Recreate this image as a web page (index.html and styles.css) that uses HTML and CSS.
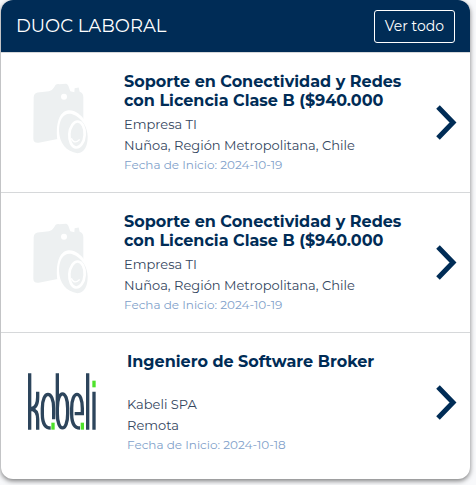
FILE: index.html
```
<!DOCTYPE html>
<html lang="es">
<head>
<meta charset="utf-8">
<meta name="viewport" content="width=device-width, initial-scale=1">
<title>DUOC LABORAL</title>
<link rel="stylesheet" href="styles.css">
</head>
<body>
<svg class="defs" aria-hidden="true">
  <symbol id="camera" viewBox="40 40 165 215">
    <path class="camera-fill" d="M42 82Q43 70 54 68L88 64Q98 62 103 53L108 45Q112 42 119 43L139 42Q145 43 148 54L152 64L164 67L165 55L177 53L180 66Q191 70 191 82V200L110 208L61 218Q41 222 41 207Z"/>
    <circle class="camera-gap" cx="133" cy="81" r="9"/>
    <path class="camera-gap" d="M113 210C107 165 118 122 148 121C168 121 184 135 194 150V215Z"/>
    <path class="camera-fill" d="M158 133C132 127 118 150 118 183C119 219 139 247 174 250C194 249 204 229 204 200C203 171 188 144 158 133Z"/>
    <ellipse class="camera-ring" cx="172" cy="194" rx="23" ry="39" transform="rotate(4 172 194)"/>
    <path class="camera-shine" d="M155 205Q163 225 180 209"/>
  </symbol>
  <symbol id="chevron" viewBox="0 0 21 35">
    <path class="chevron-line" d="M2 2L17 17.500L2 33"/>
  </symbol>
</svg>
<main class="card">
  <header class="card-header">
    <h1 class="card-title">DUOC LABORAL</h1>
    <button class="more" type="button">Ver todo</button>
  </header>
  <ul class="jobs">
    <li class="job">
      <div class="media"><svg class="camera" aria-hidden="true"><use href="#camera"/></svg></div>
      <div class="info">
        <h2 class="name">Soporte en Conectividad y Redes con Licencia Clase B ($940.000</h2>
        <p class="detail">Empresa TI</p>
        <p class="detail">Nuñoa, Región Metropolitana, Chile</p>
        <p class="date">Fecha de Inicio: 2024-10-19</p>
      </div>
      <a class="open" href="#" aria-label="Ver oferta"><svg class="chevron"><use href="#chevron"/></svg></a>
    </li>
    <li class="job">
      <div class="media"><svg class="camera" aria-hidden="true"><use href="#camera"/></svg></div>
      <div class="info">
        <h2 class="name">Soporte en Conectividad y Redes con Licencia Clase B ($940.000</h2>
        <p class="detail">Empresa TI</p>
        <p class="detail">Nuñoa, Región Metropolitana, Chile</p>
        <p class="date">Fecha de Inicio: 2024-10-19</p>
      </div>
      <a class="open" href="#" aria-label="Ver oferta"><svg class="chevron"><use href="#chevron"/></svg></a>
    </li>
    <li class="job">
      <div class="media media-logo">
        <svg class="logo" viewBox="0 0 204 171" role="img" aria-label="kabeli">
          <g class="logo-ink">
            <path d="M5 1V170M29 56V72Q29 106 8 108Q29 110 29 138V170"/>
            <path d="M77 139V106C77 50 43 50 43 106V122C43 152 52 165 68 165"/>
            <path d="M88 1V122C88 179 119 179 119 122V106C119 48 88 48 88 106"/>
            <path d="M140 122H163V106C163 50 131 50 131 106V122C131 152 140 165 156 165"/>
            <path d="M179 1V170M198 56V170"/>
          </g>
          <g class="logo-accent">
            <rect x="70" y="149" width="10" height="21"/>
            <rect x="158" y="149" width="10" height="21"/>
            <rect x="193" y="23" width="10" height="20"/>
          </g>
        </svg>
      </div>
      <div class="info">
        <h2 class="name">Ingeniero de Software Broker</h2>
        <p class="detail">Kabeli SPA</p>
        <p class="detail">Remota</p>
        <p class="date">Fecha de Inicio: 2024-10-18</p>
      </div>
      <a class="open" href="#" aria-label="Ver oferta"><svg class="chevron"><use href="#chevron"/></svg></a>
    </li>
  </ul>
</main>
</body>
</html>
```
FILE: styles.css
```
* {
  box-sizing: border-box;
}

body {
  margin: 0;
  background: #f8f9fb;
  color: #002c56;
  font-family: Montserrat, Inter, "Liberation Sans", sans-serif;
}

h1, h2, p, ul {
  margin: 0;
  padding: 0;
}

.defs {
  position: absolute;
  width: 0;
  height: 0;
}

.card {
  margin: 0 6px 6px 1px;
  overflow: hidden;
  border-radius: 12px;
  background: #fff;
  box-shadow: 0 2px 5px rgba(0, 0, 0, 0.5);
}

.card-header {
  display: flex;
  align-items: center;
  justify-content: space-between;
  height: 53px;
  padding: 0 15px;
  border-bottom: 1px solid #d6d8da;
  background: #002c56;
}

.card-title {
  color: #fff;
  font-size: 18px;
  font-weight: 400;
}

.more {
  height: 33px;
  padding: 0 10px;
  border: 1px solid #fff;
  border-radius: 3px;
  background: transparent;
  color: #fff;
  font: inherit;
  font-size: 14px;
}

.jobs {
  list-style: none;
}

.job {
  display: flex;
  align-items: flex-start;
  padding: 19px 13px 18px 15px;
  border-bottom: 1px solid #d6d8da;
}

.job:last-child {
  padding-bottom: 25px;
  border-bottom: 0;
}

.media {
  display: flex;
  flex: none;
  justify-content: center;
  width: 89px;
  margin-right: 19px;
  padding-top: 11px;
}

.media-logo {
  width: 92px;
  padding-top: 21px;
}

.camera {
  width: 55px;
  height: 72px;
}

.camera-fill {
  fill: #edf0f1;
}

.camera-gap {
  fill: #fff;
}

.camera-ring,
.camera-shine {
  fill: none;
  stroke: #fff;
  stroke-width: 8;
}

.camera-shine {
  stroke-width: 4;
}

.logo {
  width: 68px;
  height: 57px;
}

.logo-ink {
  fill: none;
  stroke: #2d455c;
  stroke-width: 10;
}

.logo-accent {
  fill: #4ee22a;
}

.info {
  flex: 1;
  min-width: 0;
}

.name {
  min-height: 38px;
  margin-bottom: 4px;
  font-size: 16px;
  font-weight: 700;
  line-height: 19px;
}

.detail {
  color: #34465e;
  font-size: 13px;
  font-weight: 400;
  line-height: 21px;
}

.date {
  color: #819fca;
  font-size: 12px;
  font-weight: 400;
  line-height: 18px;
}

.open {
  align-self: flex-start;
  padding-top: 33px;
}

.chevron {
  display: block;
  width: 21px;
  height: 35px;
}

.chevron-line {
  fill: none;
  stroke: #002c56;
  stroke-width: 5;
}
```
